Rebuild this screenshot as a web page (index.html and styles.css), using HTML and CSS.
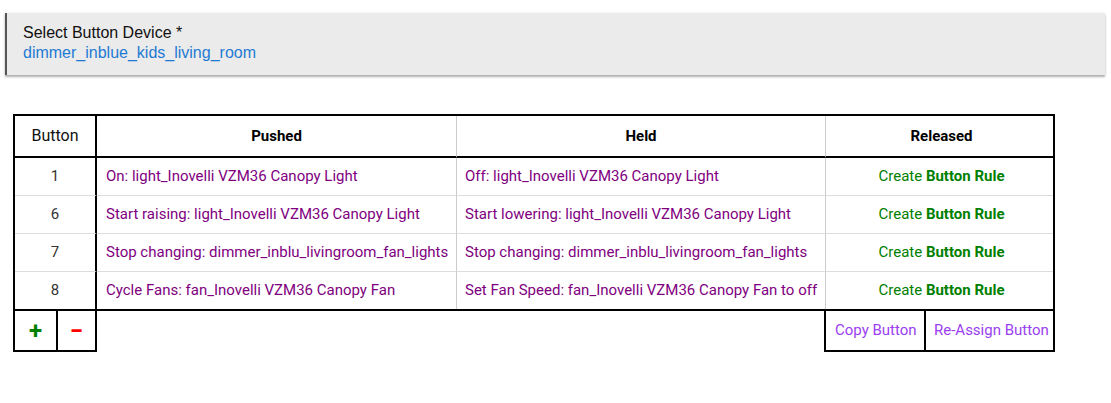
FILE: index.html
```html
<!DOCTYPE html>
<html>
<head>
<meta charset="utf-8">
<link rel="stylesheet" href="styles.css">
</head>
<body>
<div class="page">
  <div class="device">
    <div class="device-label">Select Button Device *</div>
    <div class="device-value">dimmer_inblue_kids_living_room</div>
  </div>

  <div class="mapping">
    <table class="grid">
      <thead>
        <tr>
          <th class="c-num h-num">Button</th>
          <th class="c-push">Pushed</th>
          <th class="c-held">Held</th>
          <th class="c-rel">Released</th>
        </tr>
      </thead>
      <tbody>
        <tr>
          <td class="c-num">1</td>
          <td class="c-push act">On: light_Inovelli VZM36 Canopy Light</td>
          <td class="c-held act">Off: light_Inovelli VZM36 Canopy Light</td>
          <td class="c-rel rule">Create <b>Button Rule</b></td>
        </tr>
        <tr>
          <td class="c-num">6</td>
          <td class="c-push act">Start raising: light_Inovelli VZM36 Canopy Light</td>
          <td class="c-held act">Start lowering: light_Inovelli VZM36 Canopy Light</td>
          <td class="c-rel rule">Create <b>Button Rule</b></td>
        </tr>
        <tr>
          <td class="c-num">7</td>
          <td class="c-push act">Stop changing: dimmer_inblu_livingroom_fan_lights</td>
          <td class="c-held act">Stop changing: dimmer_inblu_livingroom_fan_lights</td>
          <td class="c-rel rule">Create <b>Button Rule</b></td>
        </tr>
        <tr>
          <td class="c-num">8</td>
          <td class="c-push act">Cycle Fans: fan_Inovelli VZM36 Canopy Fan</td>
          <td class="c-held act">Set Fan Speed: fan_Inovelli VZM36 Canopy Fan to off</td>
          <td class="c-rel rule">Create <b>Button Rule</b></td>
        </tr>
      </tbody>
    </table>

    <div class="footer">
      <div class="pm">
        <span class="pm-btn plus">+</span>
        <span class="pm-btn minus">&minus;</span>
      </div>
      <div class="actions">
        <span class="action copy">Copy Button</span>
        <span class="action reassign">Re-Assign Button</span>
      </div>
    </div>
  </div>
</div>
</body>
</html>
```

FILE: styles.css
```css
* { box-sizing: border-box; }

body {
  margin: 0;
  background: #fff;
  font-family: Roboto, "Noto Sans", sans-serif;
}

.page {
  padding: 13px 6px 0 5px;
}

.device {
  width: 1100px;
  height: 62px;
  background: #ebebeb;
  border-left: 2px solid #555;
  padding: 10px 16px 12px;
  box-shadow: 0 2px 2px rgba(0, 0, 0, 0.3), 0 0 3px rgba(0, 0, 0, 0.08);
  font-family: "Liberation Sans", Arial, sans-serif;
  font-size: 16px;
  line-height: 20px;
}

.device-label { color: #111; }
.device-value { color: #1f7ad3; }

.mapping {
  margin: 39px 0 0 8px;
  width: 1042px;
}

.grid {
  width: 1042px;
  table-layout: fixed;
  border-spacing: 0;
  border: 2px solid #000;
  font-size: 15px;
  color: #222;
}

.grid th {
  padding: 0;
  line-height: 40px;
  font-weight: bold;
  color: #000;
  border-bottom: 2px solid #000;
  text-align: center;
}

.grid th.h-num {
  font-weight: normal;
  font-size: 16px;
  color: #111;
}

.grid td {
  padding: 0 9px;
  line-height: 37px;
  white-space: nowrap;
}

.grid td.c-held { padding-left: 8px; }

.grid tbody tr + tr td {
  border-top: 1px solid #ddd;
}

.c-num {
  width: 82px;
  border-right: 2px solid #000;
  text-align: center;
  color: #333;
}

.c-push {
  width: 360px;
  border-right: 1px solid #ccc;
}

.c-held {
  width: 369px;
  border-right: 1px solid #ccc;
}

.c-rel { width: 227px; }

.grid th.c-rel,
.grid td.c-rel { padding-left: 4px; padding-right: 0; }

.grid td.c-num { text-align: center; padding: 0; }

.act { color: #800080; }

.rule {
  text-align: center;
  color: #008000;
}

.rule b { font-weight: bold; color: #008000; }

.footer {
  display: flex;
  justify-content: space-between;
}

.pm {
  display: flex;
  border: 2px solid #000;
  border-top: 0;
}

.pm-btn {
  height: 39px;
  display: flex;
  align-items: center;
  justify-content: center;
  font-weight: bold;
  font-size: 24px;
}

.plus {
  width: 43px;
  border-right: 2px solid #000;
  color: #008000;
}

.minus {
  width: 37px;
  color: #ff0000;
}

.actions {
  display: flex;
  border: 2px solid #000;
  border-top: 0;
}

.action {
  height: 39px;
  line-height: 39px;
  font-size: 15px;
  color: #9b40f0;
  padding: 0 0 0 8px;
  white-space: nowrap;
}

.copy {
  width: 100px;
  padding-left: 9px;
  border-right: 2px solid #000;
}

.reassign {
  width: 127px;
}
```
